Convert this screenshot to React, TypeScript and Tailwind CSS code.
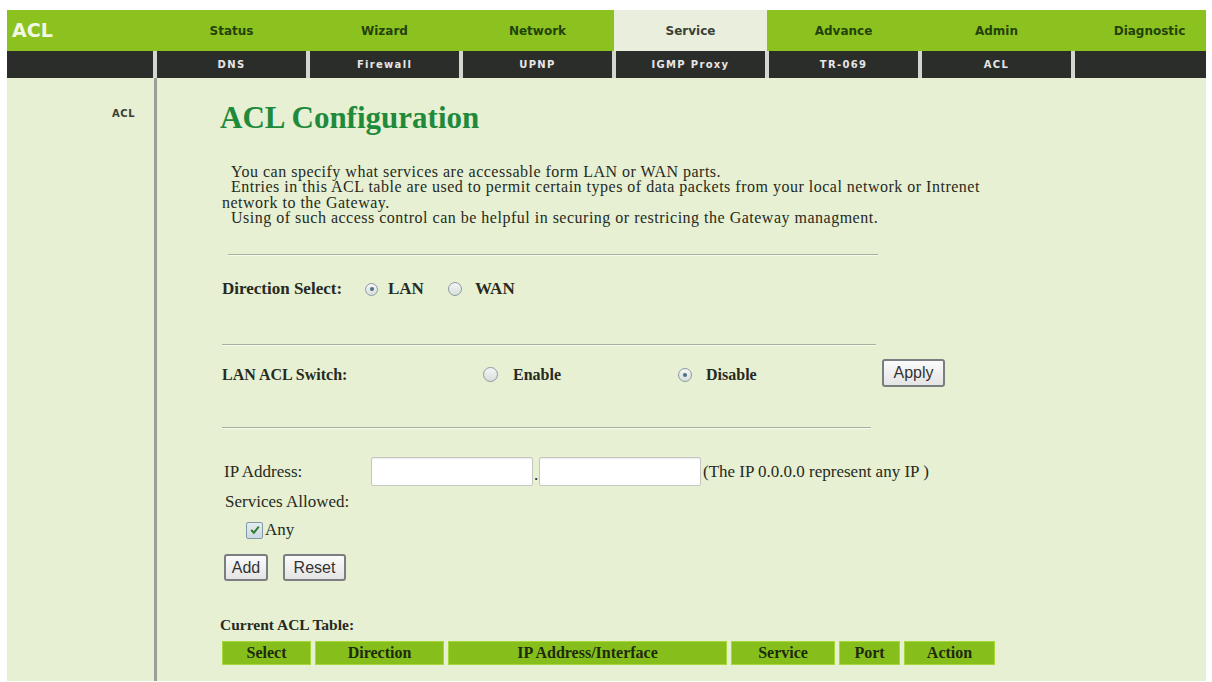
import React from "react";

const serif = { fontFamily: '"Liberation Serif", "Times New Roman", serif' };
const sans = { fontFamily: '"DejaVu Sans", Verdana, sans-serif' };
const arial = { fontFamily: '"Liberation Sans", Arial, sans-serif' };

function Radio({ checked, size }: { checked?: boolean; size: string }) {
  return (
    <span
      className={`inline-flex ${size} shrink-0 items-center justify-center rounded-full border border-[#8a9aa6] bg-gradient-to-b from-[#f4f6f4] to-[#d9dfdb]`}
    >
      {checked && <span className="h-[4px] w-[4px] rounded-full bg-[#4a6e84]" />}
    </span>
  );
}

function Btn({ children, w }: { children: React.ReactNode; w: string }) {
  return (
    <span
      className={`inline-flex h-full ${w} items-center justify-center rounded-[3px] border-2 border-[#7b7e80] bg-gradient-to-b from-[#fbfbfb] to-[#e4e4e4] text-[16px] text-[#333]`}
      style={arial}
    >
      {children}
    </span>
  );
}

function Hr({ w, ml }: { w: string; ml: string }) {
  return <div className={`${w} ${ml} h-[2px] border-t border-[#a9b09a] border-b border-b-[#f6f9ee]`} />;
}

export default function App() {
  const top = ["Status", "Wizard", "Network", "Service", "Advance", "Admin", "Diagnostic"];
  const sub = ["DNS", "Firewall", "UPNP", "IGMP Proxy", "TR-069", "ACL", ""];
  const cols = [
    { t: "Select", w: "w-[89px]" },
    { t: "Direction", w: "w-[129px]" },
    { t: "IP Address/Interface", w: "w-[279px]" },
    { t: "Service", w: "w-[104px]" },
    { t: "Port", w: "w-[61px]" },
    { t: "Action", w: "w-[91px]" },
  ];
  return (
    <div className="h-[682px] w-[1212px] overflow-hidden bg-white pl-[7px] pt-[10px]">
      <div className="w-[1199px] overflow-hidden">
        {/* top nav */}
        <div className="flex h-[41px] bg-[#8cc21f]" style={sans}>
          <div className="flex w-[148px] shrink-0 items-center pl-[5px] text-[19px] font-bold text-[#f1f7e2]">ACL</div>
          {top.map((t) => (
            <div
              key={t}
              className={`flex w-[153px] shrink-0 items-center justify-center whitespace-nowrap text-[12px] font-bold ${
                t === "Service" ? "bg-[#e9efdc] text-[#3b4036]" : "text-[#23420a]"
              }`}
            >
              {t}
            </div>
          ))}
        </div>
        {/* sub nav */}
        <div className="flex h-[27px] gap-[4px] bg-[#d4d6d0]" style={sans}>
          <div className="w-[146px] shrink-0 bg-[#2b2d2b]" />
          {sub.map((t, i) => (
            <div
              key={i}
              className={`flex ${i === 6 ? "flex-1" : "w-[149px]"} shrink-0 items-center justify-center bg-[#2b2d2b] text-[10px] font-bold tracking-[1.3px] text-[#e6e6e6]`}
            >
              {t}
            </div>
          ))}
        </div>
        {/* body */}
        <div className="flex h-[603px] bg-[#e7f0d2]">
          <div
            className="w-[147px] shrink-0 pr-[19px] pt-[28px] text-right text-[10px] font-bold tracking-[0.5px] text-[#3a3f36]"
            style={sans}
          >
            ACL
          </div>
          <div className="w-[3px] shrink-0 bg-[#9c9e98]" />
          <div className="flex-1 pl-[65px] text-[#262a22]" style={serif}>
            <div className="ml-[-2px] mt-[22px] flex h-[36px] items-center text-[31px] font-bold text-[#1f8a3c]">
              ACL Configuration
            </div>
            <div className="mt-[28px] w-[770px] text-[16px] leading-[15.3px] tracking-[0.5px]">
              <div>&nbsp;&nbsp;You can specify what services are accessable form LAN or WAN parts.</div>
              <div>
                &nbsp;&nbsp;Entries in this ACL table are used to permit certain types of data packets from your local network or Intrenet
                network to the Gateway.
              </div>
              <div>&nbsp;&nbsp;Using of such access control can be helpful in securing or restricing the Gateway managment.</div>
            </div>
            <div className="mt-[29px]">
              <Hr w="w-[650px]" ml="ml-[6px]" />
            </div>
            <div className="mt-[23px] flex h-[20px] items-center text-[17px] font-bold">
              <div className="w-[143px] shrink-0">Direction Select:</div>
              <div className="flex w-[83px] shrink-0 items-center gap-[10px]">
                <Radio checked size="h-[13px] w-[13px]" />
                <span>LAN</span>
              </div>
              <div className="flex items-center gap-[13px]">
                <Radio size="h-[14px] w-[14px]" />
                <span>WAN</span>
              </div>
            </div>
            <div className="mt-[45px]">
              <Hr w="w-[654px]" ml="ml-0" />
            </div>
            <div className="mt-[13px] flex h-[28px] items-center text-[16px] font-bold">
              <div className="w-[261px] shrink-0 pt-[3px]">LAN ACL Switch:</div>
              <div className="flex w-[195px] shrink-0 items-center gap-[15px] pt-[3px]">
                <Radio size="h-[15px] w-[15px]" />
                <span>Enable</span>
              </div>
              <div className="flex w-[204px] shrink-0 items-center gap-[14px] pt-[3px]">
                <Radio checked size="h-[14px] w-[14px]" />
                <span>Disable</span>
              </div>
              <div className="h-[28px] font-normal">
                <Btn w="w-[63px]">Apply</Btn>
              </div>
            </div>
            <div className="mt-[40px]">
              <Hr w="w-[649px]" ml="ml-0" />
            </div>
            <div className="mt-[28px] flex h-[29px] items-center text-[17px]">
              <div className="ml-[2px] w-[147px] shrink-0">IP Address:</div>
              <div className="h-[29px] w-[162px] shrink-0 rounded-[2px] border border-[#c4c8c0] bg-white shadow-[inset_0_1px_1px_rgba(0,0,0,0.08)]" />
              <div className="flex w-[6px] shrink-0 justify-center self-end pb-[3px] leading-none">.</div>
              <div className="h-[29px] w-[162px] shrink-0 rounded-[2px] border border-[#c4c8c0] bg-white shadow-[inset_0_1px_1px_rgba(0,0,0,0.08)]" />
              <div className="ml-[2px] whitespace-nowrap">(The IP 0.0.0.0 represent any IP )</div>
            </div>
            <div className="ml-[3px] mt-[7px] flex h-[18px] items-center text-[17px]">Services Allowed:</div>
            <div className="ml-[24px] mt-[10px] flex h-[18px] items-center gap-[2px] text-[17px]">
              <span className="flex h-[17px] w-[17px] items-center justify-center rounded-[2px] border border-[#7e9aa8] bg-gradient-to-b from-[#e4ecf0] to-[#cdd9df]">
                <svg width="12" height="12" viewBox="0 0 11 11">
                  <path d="M2 5.5 L4.5 8 L9 2.5" fill="none" stroke="#2f7d32" strokeWidth="1.8" />
                </svg>
              </span>
              <span>Any</span>
            </div>
            <div className="ml-[2px] mt-[15px] flex h-[27px] gap-[15px]">
              <Btn w="w-[44px]">Add</Btn>
              <Btn w="w-[63px]">Reset</Btn>
            </div>
            <div className="ml-[-2px] mt-[35px] flex h-[16px] items-center text-[15.5px] font-bold">
              Current ACL Table:
            </div>
            <div className="mt-[9px] flex h-[24px] gap-[4px]">
              {cols.map((c) => (
                <div
                  key={c.t}
                  className={`${c.w} flex shrink-0 items-center justify-center border border-[#a6d83a] bg-[#86bf1c] text-[16px] font-bold text-[#1e2a0c]`}
                >
                  {c.t}
                </div>
              ))}
            </div>
          </div>
        </div>
      </div>
    </div>
  );
}
